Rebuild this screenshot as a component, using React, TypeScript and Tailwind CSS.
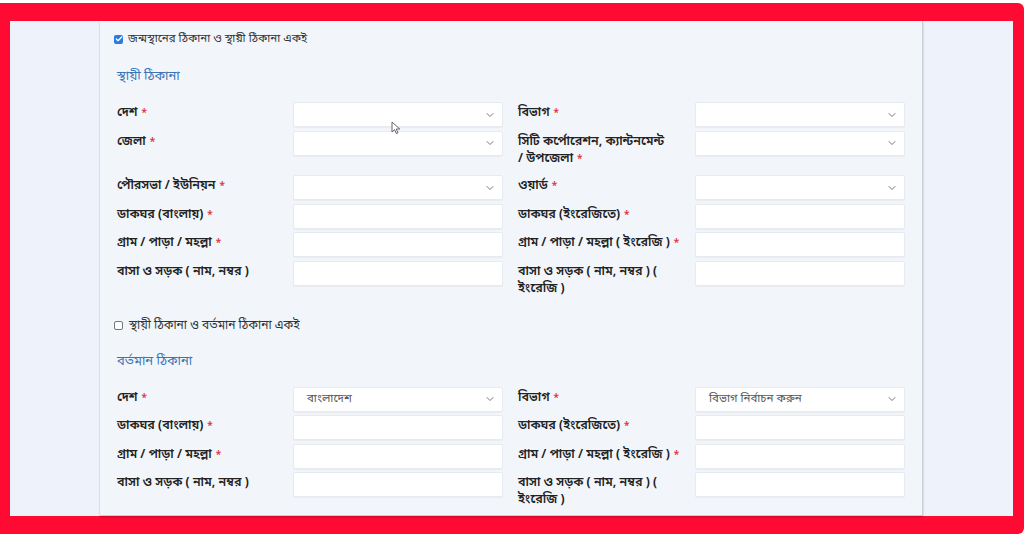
import { ChevronDown, Check } from 'lucide-react';

const bn = "font-['Noto_Sans_Bengali','Lohit_Bengali','Noto_Sans',sans-serif]";

type Row = {
    label: string;
    req?: boolean;
    select?: boolean;
    value?: string;
};

function Field({ label, req, select, value, wide }: Row & { wide?: boolean }) {
    return (
        <div className="flex items-start">
            <div
                className={`${wide ? 'w-[177px]' : 'w-[176px]'} shrink-0 whitespace-pre-line pb-[4px] pr-2 pt-[3px] text-[12.5px] font-semibold leading-[17px] text-[#222]`}
            >
                {label}
                {req && (
                    <span className="ml-1 align-top text-[10px] leading-[17px] text-[#e0343f]">
                        *
                    </span>
                )}
            </div>
            <div className="flex h-[25px] w-[210px] shrink-0 items-center justify-between rounded-[2px] border border-[#e6ebf1] bg-white pl-[13px] pr-[6px] shadow-[0_1px_1px_rgba(0,0,0,0.04)]">
                <span className="text-[11.5px] leading-[16px] text-[#555]">{value}</span>
                {select && (
                    <ChevronDown className="h-3 w-3 text-[#777]" strokeWidth={2} />
                )}
            </div>
        </div>
    );
}

function Grid({ rows }: { rows: [Row, Row][] }) {
    return (
        <div className="grid grid-cols-[386px_387px] gap-x-[15px] gap-y-[3.5px]">
            {rows.map(([l, r], i) => (
                <div key={i} className="contents">
                    <Field {...l} />
                    <Field {...r} wide />
                </div>
            ))}
        </div>
    );
}

const permanent: [Row, Row][] = [
    [
        { label: 'দেশ', req: true, select: true },
        { label: 'বিভাগ', req: true, select: true },
    ],
    [
        { label: 'জেলা', req: true, select: true },
        {
            label: 'সিটি কর্পোরেশন, ক্যান্টনমেন্ট\n/ উপজেলা',
            req: true,
            select: true,
        },
    ],
    [
        { label: 'পৌরসভা / ইউনিয়ন', req: true, select: true },
        { label: 'ওয়ার্ড', req: true, select: true },
    ],
    [
        { label: 'ডাকঘর (বাংলায়)', req: true },
        { label: 'ডাকঘর (ইংরেজিতে)', req: true },
    ],
    [
        { label: 'গ্রাম / পাড়া / মহল্লা', req: true },
        { label: 'গ্রাম / পাড়া / মহল্লা ( ইংরেজি )', req: true },
    ],
    [
        { label: 'বাসা ও সড়ক ( নাম, নম্বর )' },
        { label: 'বাসা ও সড়ক ( নাম, নম্বর ) (\nইংরেজি )' },
    ],
];

const present: [Row, Row][] = [
    [
        { label: 'দেশ', req: true, select: true, value: 'বাংলাদেশ' },
        {
            label: 'বিভাগ',
            req: true,
            select: true,
            value: 'বিভাগ নির্বাচন করুন',
        },
    ],
    [
        { label: 'ডাকঘর (বাংলায়)', req: true },
        { label: 'ডাকঘর (ইংরেজিতে)', req: true },
    ],
    [
        { label: 'গ্রাম / পাড়া / মহল্লা', req: true },
        { label: 'গ্রাম / পাড়া / মহল্লা ( ইংরেজি )', req: true },
    ],
    [
        { label: 'বাসা ও সড়ক ( নাম, নম্বর )' },
        { label: 'বাসা ও সড়ক ( নাম, নম্বর ) (\nইংরেজি )' },
    ],
];

export default function App() {
    return (
        <div className={`h-[536px] w-[1024px] overflow-hidden bg-white pt-[3px] ${bn}`}>
            <div className="h-[531px] rounded-r-[6px] bg-[#ff0a33] pb-[18px] pl-[10px] pr-[11px] pt-[18px]">
                <div className="flex h-full bg-[#eef3fb]">
                    <div className="relative ml-[90px] h-full w-[823px] border-b border-r border-[#c9ced6] bg-[#f2f6fb] pl-[14px] pt-[10px] shadow-[0_1px_2px_rgba(0,0,0,0.25)]">
                        <label className="flex items-center gap-[5px]">
                            <span className="flex h-[9px] w-[9px] items-center justify-center rounded-[2px] bg-[#2c7be0]">
                                <Check className="h-[8px] w-[8px] text-white" strokeWidth={4} />
                            </span>
                            <span className="text-[11.5px] leading-[16px] text-[#333]">
                                জন্মস্থানের ঠিকানা ও স্থায়ী ঠিকানা একই
                            </span>
                        </label>

                        <h3 className="ml-[3px] mt-[21px] text-[13px] leading-[18px] text-[#3b74b5]">
                            স্থায়ী ঠিকানা
                        </h3>

                        <div className="ml-[3px] mt-[16px]">
                            <Grid rows={permanent} />
                        </div>

                        <label className="mt-[16px] flex items-center gap-[6px]">
                            <span className="h-[9px] w-[9px] rounded-[2px] border border-[#777] bg-white" />
                            <span className="text-[12px] leading-[16px] text-[#333]">
                                স্থায়ী ঠিকানা ও বর্তমান ঠিকানা একই
                            </span>
                        </label>

                        <h3 className="ml-[3px] mt-[19px] text-[13px] leading-[18px] text-[#3b74b5]">
                            বর্তমান ঠিকানা
                        </h3>

                        <div className="ml-[3px] mt-[16px]">
                            <Grid rows={present} />
                        </div>

                        <svg
                            className="absolute left-[291px] top-[100px]"
                            width="10"
                            height="14"
                            viewBox="0 0 10 14"
                        >
                            <path
                                d="M1 1 L1 11 L3.6 8.6 L5.4 12.6 L7 11.9 L5.3 8 L8.8 8 Z"
                                fill="#fff"
                                stroke="#666"
                                strokeWidth="1"
                                strokeLinejoin="round"
                            />
                        </svg>
                    </div>
                </div>
            </div>
        </div>
    );
}
